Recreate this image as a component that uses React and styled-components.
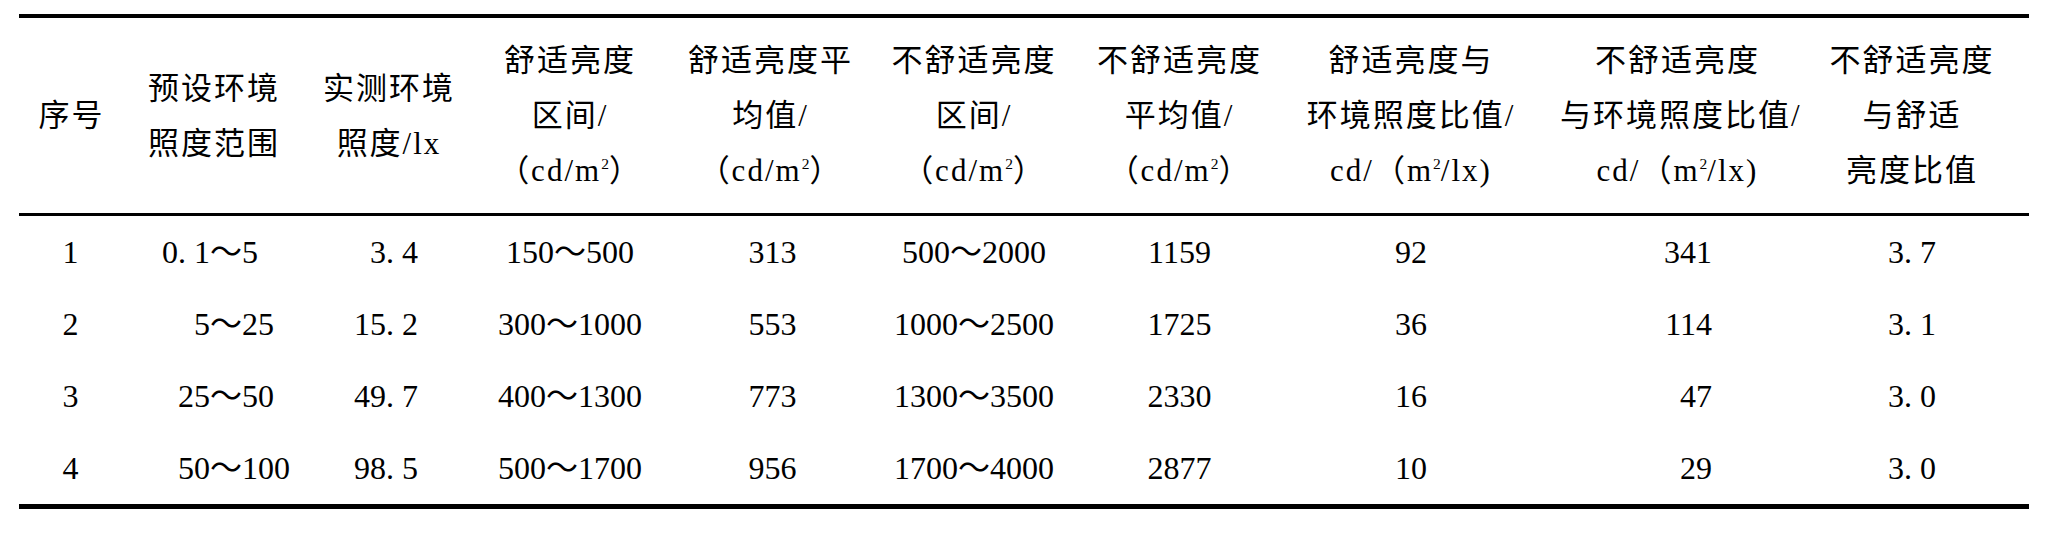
import React from "react";
import styled, { createGlobalStyle } from "styled-components";

const Global = createGlobalStyle`
  html, body { margin: 0; padding: 0; background: #fff; }
  body { font-family: "Liberation Serif", "Noto Sans CJK SC", serif; color: #000; }
`;

const Page = styled.div`
  padding: 14px 18px 24px 19px;
  width: 2010px;
`;

const Table = styled.table`
  width: 2010px;
  table-layout: fixed;
  border-collapse: separate;
  border-spacing: 0;
  border-top: 4px solid #000;
  border-bottom: 5px solid #000;
  font-family: "Liberation Serif", "Noto Sans CJK SC", serif;
`;

const HeadRow = styled.tr`
  height: 198px;
`;

const shiftPad = (s = 0) =>
  `padding: 0 ${s < 0 ? -2 * s : 0}px 0 ${s > 0 ? 2 * s : 0}px;`;

const HeadCell = styled.th`
  ${(p) => shiftPad(p.$shift)}
  border-bottom: 3px solid #000;
  font-weight: 400;
  font-size: 31px;
  letter-spacing: 2px;
  line-height: 55px;
  text-align: center;
  vertical-align: middle;
  white-space: nowrap;
`;

const Line = styled.div`
  display: block;
`;

const Sup = styled.sup`
  font-size: 0.5em;
  vertical-align: 0.8em;
  line-height: 0;
  letter-spacing: 0;
`;

const BodyRow = styled.tr`
  height: 72px;
`;

const Cell = styled.td`
  ${(p) => shiftPad(p.$shift)}
  font-size: 32px;
  line-height: 36px;
  text-align: ${(p) => p.$align || "center"};
  vertical-align: middle;
  white-space: nowrap;
`;

const RightCell = styled(Cell)`
  padding: 0 ${(p) => p.$padRight}px 0 0;
  text-align: right;
`;

const Dot = styled.span`
  padding-right: 0.25em;
`;

const Range = styled.div`
  display: grid;
  grid-template-columns: 1fr auto 1fr;
  align-items: baseline;
`;

const RangeLeft = styled.span`
  text-align: right;
`;

const RangeRight = styled.span`
  text-align: left;
`;

const Num = ({ v }) => {
  const parts = v.split(".");
  if (parts.length === 1) return <>{v}</>;
  return (
    <>
      {parts[0]}
      <Dot>.</Dot>
      {parts[1]}
    </>
  );
};

const UNIT = (
  <>
    （cd/m<Sup>2</Sup>）
  </>
);
const RATIO = (
  <>
    cd/（m<Sup>2</Sup>/lx)
  </>
);

const widths = [121, 160, 178, 190, 205, 202, 217, 250, 253, 234];
const headShift = [-8, -6, 0, -3, 0, 0, -4, -6, 9, 0];
const bodyShift = [-9, 6, 0, -3, 2, 0, -4, -6, 0, 0];
const rightPad = { 2: 60, 8: 83 };

const headers = [
  ["序号"],
  ["预设环境", "照度范围"],
  ["实测环境", "照度/lx"],
  ["舒适亮度", "区间/", UNIT],
  ["舒适亮度平", "均值/", UNIT],
  ["不舒适亮度", "区间/", UNIT],
  ["不舒适亮度", "平均值/", UNIT],
  ["舒适亮度与", "环境照度比值/", RATIO],
  ["不舒适亮度", "与环境照度比值/", RATIO],
  ["不舒适亮度", "与舒适", "亮度比值"],
];

const rows = [
  ["1", ["0.1", "5"], "3.4", "150～500", "313", "500～2000", "1159", "92", "341", "3.7"],
  ["2", ["5", "25"], "15.2", "300～1000", "553", "1000～2500", "1725", "36", "114", "3.1"],
  ["3", ["25", "50"], "49.7", "400～1300", "773", "1300～3500", "2330", "16", "47", "3.0"],
  ["4", ["50", "100"], "98.5", "500～1700", "956", "1700～4000", "2877", "10", "29", "3.0"],
];

const Value = ({ v }) =>
  Array.isArray(v) ? (
    <Range>
      <RangeLeft>
        <Num v={v[0]} />
      </RangeLeft>
      <span>～</span>
      <RangeRight>{v[1]}</RangeRight>
    </Range>
  ) : (
    <Num v={v} />
  );

export default function App() {
  return (
    <Page>
      <Global />
      <Table>
        <colgroup>
          {widths.map((w, i) => (
            <col key={i} style={{ width: w }} />
          ))}
        </colgroup>
        <thead>
          <HeadRow>
            {headers.map((lines, i) => (
              <HeadCell key={i} $shift={headShift[i]}>
                {lines.map((l, j) => (
                  <Line key={j}>{l}</Line>
                ))}
              </HeadCell>
            ))}
          </HeadRow>
        </thead>
        <tbody>
          {rows.map((r, ri) => (
            <BodyRow key={ri}>
              {r.map((v, ci) =>
                rightPad[ci] ? (
                  <RightCell key={ci} $padRight={rightPad[ci]}>
                    <Value v={v} />
                  </RightCell>
                ) : (
                  <Cell key={ci} $shift={bodyShift[ci]}>
                    <Value v={v} />
                  </Cell>
                )
              )}
            </BodyRow>
          ))}
        </tbody>
      </Table>
    </Page>
  );
}
